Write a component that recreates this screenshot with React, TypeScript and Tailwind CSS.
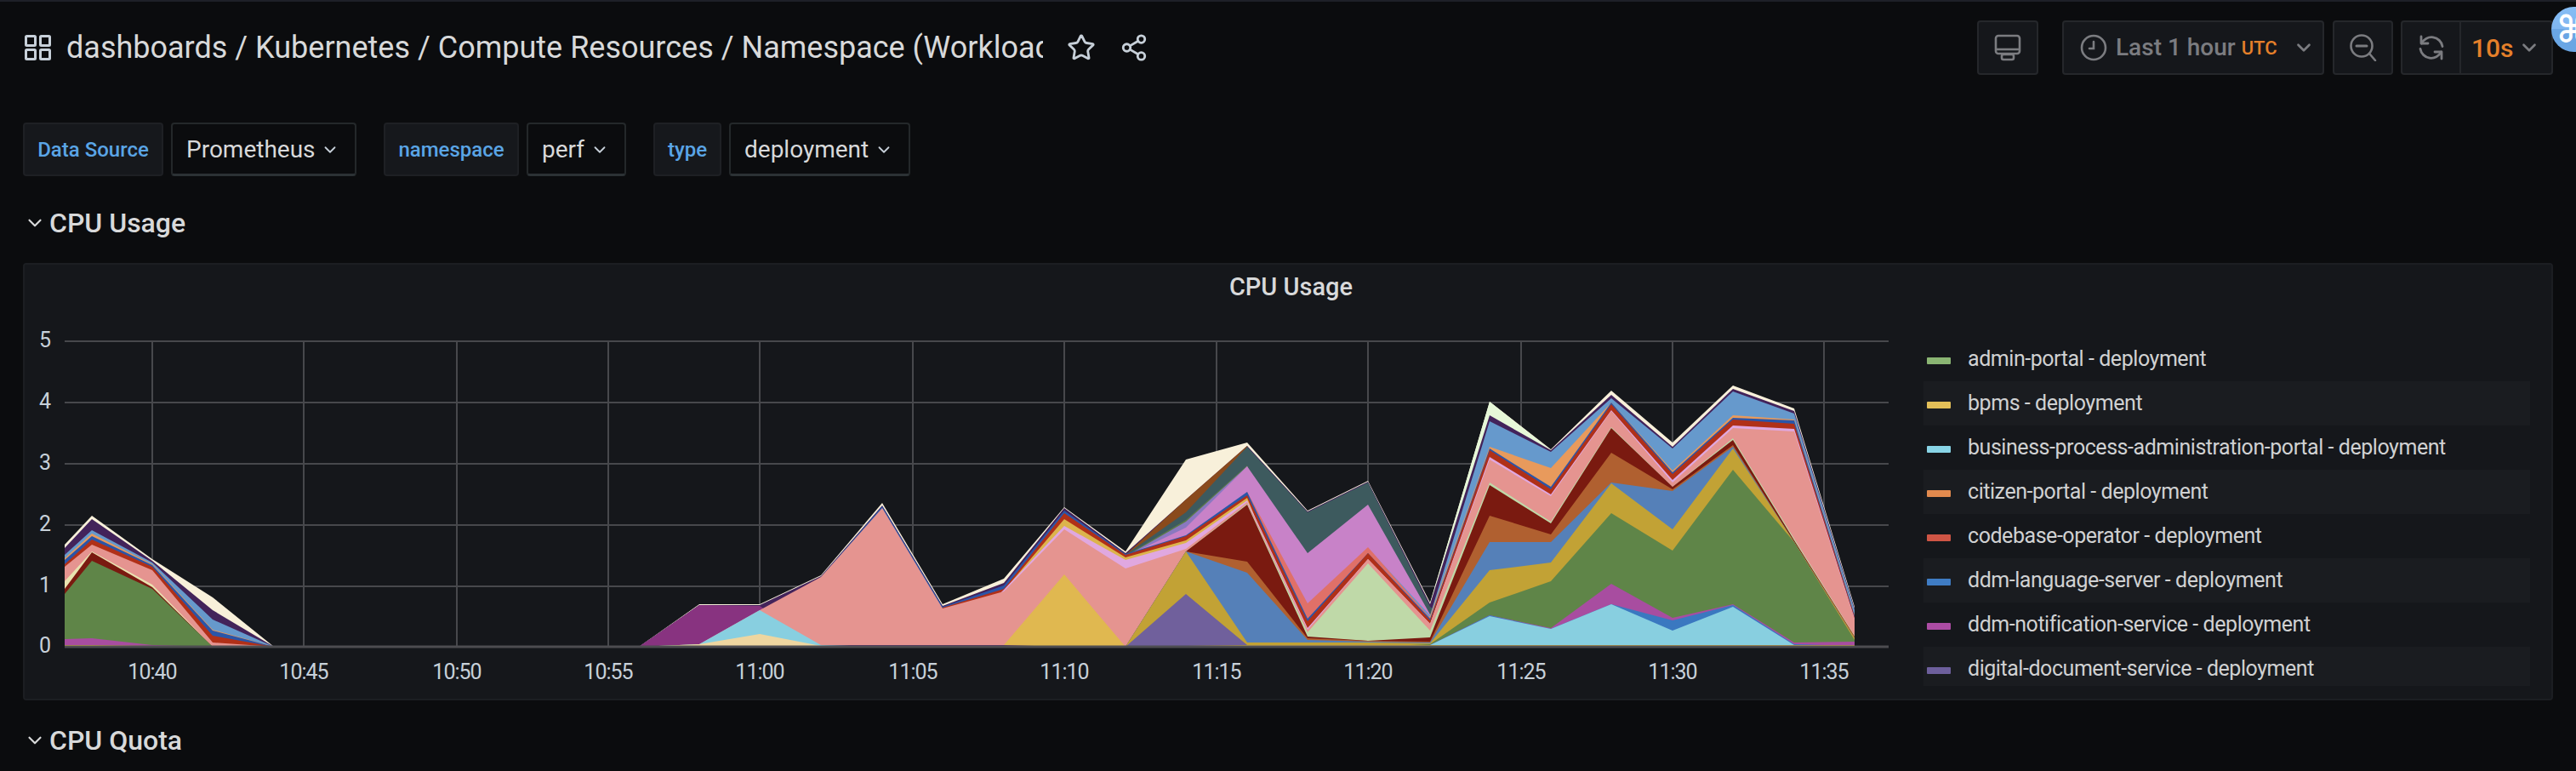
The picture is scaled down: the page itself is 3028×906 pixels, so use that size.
import React from 'react';
import { ChevronDown, Star, Share2 } from 'lucide-react';

// x position of every sample, page pixels
const XS = [76, 108, 179, 250, 322, 393, 465, 536, 608, 679, 751, 822, 893, 965, 1037, 1108, 1180, 1251, 1323, 1394, 1466, 1537, 1608, 1681, 1751, 1823, 1894, 1966, 2037, 2109, 2180];
const BASE = 760;

// a = 10:37-10:42, b = 10:58-11:22, c = 11:24-11:36, heights above the axis in px
const band = (a: number[], b: number[], c: number[]) => [...a, 0, 0, 0, 0, 0, 0, 0, ...b, ...c];
const A0 = [0, 0, 0, 0];
const B0 = [0, 0, 0, 0, 0, 0, 0, 0, 0, 0, 0, 0, 0];
const C0 = [0, 0, 0, 0, 0, 0, 0];

const LAYERS: { color: string; h: number[] }[] = [
  { color: '#f8f0da', h: band([120, 154, 103, 58], [50, 50, 84, 169, 50, 80, 164, 112, 220, 240, 160, 195, 52], [288, 232, 301, 240, 307, 280, 47]) },
  { color: '#e6f8d8', h: band(A0, [0, 0, 0, 0, 0, 0, 0, 0, 0, 0, 0, 0, 51], [288, 231, 0, 0, 0, 0, 0]) },
  { color: '#43235a', h: band([116, 150, 101, 43], [49, 49, 83, 166, 48, 75, 163, 110, 173, 236, 159, 194, 50], [272, 231, 296, 235, 303, 277, 45]) },
  { color: '#883380', h: band(A0, [49, 48, 0, 0, 0, 0, 0, 0, 0, 0, 0, 0, 0], C0) },
  { color: '#8a4a1c', h: band(A0, [0, 0, 0, 0, 0, 0, 0, 108, 173, 236, 0, 0, 0], C0) },
  { color: '#3d5a5e', h: band(A0, [0, 0, 0, 0, 0, 0, 0, 108, 158, 235, 158, 193, 47], C0) },
  { color: '#5a7a48', h: band(A0, [0, 0, 0, 0, 0, 0, 0, 107, 149, 213, 0, 0, 0], C0) },
  { color: '#8a78c0', h: band(A0, [0, 0, 0, 0, 0, 0, 0, 106, 147, 212, 0, 0, 0], C0) },
  { color: '#c882c8', h: band(A0, [0, 0, 0, 0, 0, 0, 0, 106, 140, 212, 110, 167, 38], C0) },
  { color: '#6699cc', h: band([108, 137, 99, 32], [0, 0, 0, 0, 0, 0, 0, 0, 0, 0, 0, 116, 37], [265, 229, 292, 233, 300, 274, 43]) },
  { color: '#e89a5c', h: band([104, 133, 97, 20], [0, 0, 0, 0, 0, 0, 0, 0, 0, 0, 0, 0, 36], [235, 210, 287, 207, 272, 267, 38]) },
  { color: '#e07068', h: band(A0, [0, 0, 0, 0, 0, 0, 0, 0, 0, 182, 51, 117, 34], C0) },
  { color: '#2a55a8', h: band([102, 130, 96, 19], [0, 0, 82, 165, 47, 72, 160, 109, 131, 182, 33, 110, 33], [233, 188, 287, 205, 269, 266, 37]) },
  { color: '#b03018', h: band([97, 126, 94, 13], [0, 0, 0, 0, 46, 68, 157, 108, 130, 178, 30, 110, 31], [231, 185, 285, 203, 267, 262, 35]) },
  { color: '#dcb44c', h: band(A0, [0, 0, 0, 0, 0, 66, 150, 105, 125, 175, 0, 0, 0], C0) },
  { color: '#e0a8e0', h: band(A0, [0, 0, 0, 0, 0, 67, 142, 102, 122, 172, 22, 103, 27], [223, 179, 278, 196, 260, 256, 33]) },
  { color: '#e59490', h: band([94, 120, 90, 5], [3, 43, 82, 163, 45, 65, 138, 92, 115, 170, 20, 103, 27], [220, 177, 277, 193, 257, 253, 32]) },
  { color: '#e8e3b0', h: band([77, 112, 73, 0], B0, C0) },
  { color: '#bfd9a8', h: band(A0, [0, 0, 0, 0, 0, 0, 0, 0, 112, 168, 17, 98, 19], [193, 147, 258, 188, 245, 127, 13]) },
  { color: '#7a1a10', h: band([68, 111, 70, 0], [0, 0, 0, 0, 0, 0, 0, 0, 112, 167, 12, 7, 11], [190, 145, 257, 188, 243, 125, 12]) },
  { color: '#b06030', h: band(A0, [0, 0, 0, 0, 0, 0, 0, 0, 112, 100, 10, 7, 6], [154, 132, 228, 185, 237, 123, 12]) },
  { color: '#5580b8', h: band(A0, [0, 0, 0, 0, 0, 0, 0, 0, 112, 87, 8, 6, 5], [123, 123, 193, 183, 235, 123, 10]) },
  { color: '#c2a235', h: band(A0, [0, 0, 0, 0, 0, 0, 0, 0, 112, 5, 5, 5, 4], [90, 99, 192, 138, 233, 123, 10]) },
  { color: '#e0b850', h: band(A0, [0, 0, 0, 0, 0, 2, 85, 0, 0, 0, 0, 0, 0], C0) },
  { color: '#70609c', h: band(A0, [0, 0, 0, 0, 0, 0, 0, 0, 62, 2, 0, 0, 0], C0) },
  { color: '#5c2f6a', h: band(A0, [3, 2, 2, 2, 2, 2, 0, 0, 0, 0, 0, 0, 0], C0) },
  { color: '#5f8548', h: band([62, 101, 68, 0], [0, 0, 0, 0, 0, 0, 0, 0, 0, 0, 0, 0, 3], [52, 77, 157, 113, 208, 123, 8]) },
  { color: '#a84da0', h: band([9, 10, 2, 0], [0, 0, 0, 0, 0, 0, 0, 0, 0, 0, 0, 0, 2], [37, 22, 74, 34, 50, 5, 6]) },
  { color: '#3a78c0', h: band(A0, [0, 0, 0, 0, 0, 0, 0, 0, 0, 0, 0, 0, 2], [37, 21, 50, 31, 49, 3, 1]) },
  { color: '#88cfe0', h: band(A0, [3, 43, 2, 0, 0, 0, 0, 0, 0, 0, 0, 0, 2], [36, 21, 50, 19, 47, 2, 1]) },
  { color: '#eed6a0', h: band(A0, [3, 15, 1, 0, 0, 0, 0, 0, 0, 0, 0, 0, 0], C0) },
  { color: '#e0b84c', h: band([2, 2, 1, 0], [0, 0, 0, 0, 0, 0, 0, 1, 1, 2, 2, 2, 2], [2, 2, 2, 2, 2, 2, 2]) },
];

const Y_TICKS = [
  { label: '5', y: 401 },
  { label: '4', y: 473 },
  { label: '3', y: 545 },
  { label: '2', y: 617 },
  { label: '1', y: 689 },
  { label: '0', y: 760 },
];

const X_TICKS = [
  { label: '10:40', x: 179 },
  { label: '10:45', x: 357 },
  { label: '10:50', x: 537 },
  { label: '10:55', x: 715 },
  { label: '11:00', x: 893 },
  { label: '11:05', x: 1073 },
  { label: '11:10', x: 1251 },
  { label: '11:15', x: 1430 },
  { label: '11:20', x: 1608 },
  { label: '11:25', x: 1788 },
  { label: '11:30', x: 1966 },
  { label: '11:35', x: 2144 },
];

const LEGEND = [
  { name: 'admin-portal - deployment', color: 'bg-[#8ab573]' },
  { name: 'bpms - deployment', color: 'bg-[#e3bf58]' },
  { name: 'business-process-administration-portal - deployment', color: 'bg-[#88d4e6]' },
  { name: 'citizen-portal - deployment', color: 'bg-[#e28a4e]' },
  { name: 'codebase-operator - deployment', color: 'bg-[#cf5545]' },
  { name: 'ddm-language-server - deployment', color: 'bg-[#3f7cc4]' },
  { name: 'ddm-notification-service - deployment', color: 'bg-[#ac4ca4]' },
  { name: 'digital-document-service - deployment', color: 'bg-[#6d5f9c]' },
];

const Chart = () => (
  <svg width={2190} height={428} viewBox="36 380 2190 428" className="shrink-0 block">
    {Y_TICKS.slice(0, 5).map((t) => (
      <line key={t.y} x1={76} x2={2220} y1={t.y} y2={t.y} stroke="#47484c" strokeWidth={2} />
    ))}
    {X_TICKS.map((t) => (
      <line key={t.x} x1={t.x} x2={t.x} y1={400} y2={760} stroke="#47484c" strokeWidth={2} />
    ))}
    {LAYERS.map((l, i) => (
      <polygon
        key={i}
        fill={l.color}
        points={`76,${BASE} ` + XS.map((x, j) => `${x},${BASE - l.h[j]}`).join(' ') + ` 2180,${BASE}`}
      />
    ))}
    <line x1={76} x2={2220} y1={760} y2={760} stroke="#4c4c50" strokeWidth={3} />
    {Y_TICKS.map((t) => (
      <text key={t.label} x={60} y={t.y + 7} textAnchor="end" fontSize={25} fill="#c7d0d9" fontFamily="Roboto, sans-serif">
        {t.label}
      </text>
    ))}
    {X_TICKS.map((t) => (
      <text key={t.label} x={t.x} y={798} textAnchor="middle" fontSize={25} letterSpacing={-1} fill="#c7d0d9" fontFamily="Roboto, sans-serif">
        {t.label}
      </text>
    ))}
  </svg>
);

const DashIcon = () => (
  <svg width={31} height={30} viewBox="0 0 31 30" fill="none" stroke="#c7d0d9" strokeWidth={3}>
    <rect x={1.500} y={1.500} width={11} height={11} rx={1} />
    <rect x={18.500} y={1.500} width={11} height={11} rx={1} />
    <rect x={1.500} y={17.500} width={11} height={11} rx={1} />
    <rect x={18.500} y={17.500} width={11} height={11} rx={1} />
  </svg>
);

const MonitorIcon = () => (
  <svg width={32} height={32} viewBox="0 0 32 32" fill="none" stroke="#7b7c80" strokeWidth={2.6} strokeLinejoin="round">
    <rect x={2} y={2} width={28} height={21} rx={3} />
    <line x1={2} y1={18} x2={30} y2={18} />
    <rect x={9} y={24} width={14} height={6} rx={2} />
  </svg>
);

const ClockIcon = () => (
  <svg width={32} height={32} viewBox="0 0 32 32" fill="none" stroke="#7b7c80" strokeWidth={2.6} strokeLinecap="round">
    <circle cx={16} cy={16} r={14} />
    <path d="M16 9v8h-5" />
  </svg>
);

const ZoomOutIcon = () => (
  <svg width={32} height={32} viewBox="0 0 32 32" fill="none" stroke="#7b7c80" strokeWidth={2.6} strokeLinecap="round">
    <circle cx={14} cy={14} r={12.5} />
    <line x1={8} y1={14} x2={20} y2={14} strokeWidth={3} />
    <line x1={24} y1={24} x2={30} y2={31} />
  </svg>
);

const SyncIcon = () => (
  <svg width={32} height={32} viewBox="0 0 32 32" fill="none" stroke="#7b7c80" strokeWidth={2.8} strokeLinecap="round" strokeLinejoin="round">
    <path d="M4 3v8h8" />
    <path d="M4.500 11A13 13 0 0 1 29 14.500" />
    <path d="M28 29v-8h-8" />
    <path d="M27.500 21A13 13 0 0 1 3 17.500" />
  </svg>
);

const ToolBtn = ({ children, className }: { children: React.ReactNode; className?: string }) => (
  <div className={`h-[64px] flex items-center justify-center bg-[#15171b] border-2 border-[#25272b] rounded-[4px] ${className ?? ''}`}>
    {children}
  </div>
);

const Variable = ({ label, value, labelW, valueW }: { label: string; value: string; labelW: string; valueW: string }) => (
  <div className="flex gap-[9px]">
    <div className={`${labelW} h-[63px] flex items-center justify-center bg-[#16181c] border-2 border-[#1e2024] rounded-[4px] text-[24px] font-medium text-[#5aa5e6]`}>
      {label}
    </div>
    <div className={`${valueW} h-[63px] flex items-center justify-between pl-[16px] pr-[18px] pt-[2px] bg-[#0b0c0e] border-2 border-[#24282a] border-b-[3px] border-b-[#2c3235] rounded-[4px] text-[28px] text-[#d8d9da]`}>
      {value}
      <ChevronDown size={22} color="#c7d0d9" strokeWidth={2} />
    </div>
  </div>
);

const RowTitle = ({ title, className }: { title: string; className?: string }) => (
  <div className={`h-[44px] flex items-center pl-[28px] gap-[4px] text-[32px] font-medium text-[#d8d9da] ${className ?? ''}`}>
    <ChevronDown size={26} color="#d8d9da" strokeWidth={2} />
    {title}
  </div>
);

export default function App() {
  return (
    <div className="relative w-[3028px] h-[906px] overflow-hidden bg-[#0b0c0e] font-['Roboto',sans-serif]">
      <div className="h-[2px] bg-[#1e2028]" />

      {/* top bar */}
      <div className="flex items-center justify-between pl-[29px] pr-[27px] mt-[22px] h-[64px]">
        <div className="flex items-center">
          <DashIcon />
          <div className="w-[1148px] ml-[18px] overflow-hidden whitespace-nowrap text-[36px] text-[#d8d9da]">
            dashboards / Kubernetes / Compute Resources / Namespace (Workload
          </div>
          <Star size={34} color="#c7d0d9" strokeWidth={2} className="ml-[28px]" />
          <Share2 size={34} color="#c7d0d9" strokeWidth={2} className="ml-[28px]" />
        </div>
        <div className="flex items-center">
          <ToolBtn className="w-[72px]">
            <MonitorIcon />
          </ToolBtn>
          <ToolBtn className="w-[308px] ml-[28px] !justify-start pl-[19px]">
            <ClockIcon />
            <span className="ml-[10px] text-[28px] font-medium text-[#7b7c80]">Last 1 hour</span>
            <span className="ml-[7px] text-[22px] font-medium text-[#e5802a]">UTC</span>
            <ChevronDown size={26} color="#7b7c80" strokeWidth={2.5} className="ml-[18px]" />
          </ToolBtn>
          <ToolBtn className="w-[71px] ml-[10px]">
            <ZoomOutIcon />
          </ToolBtn>
          <div className="flex h-[64px] w-[179px] ml-[9px] bg-[#15171b] border-2 border-[#25272b] rounded-[4px]">
            <div className="w-[69px] flex items-center justify-center border-r-2 border-[#25272b]">
              <SyncIcon />
            </div>
            <div className="flex items-center pl-[12px]">
              <span className="text-[30px] font-medium text-[#e5802a]">10s</span>
              <ChevronDown size={26} color="#7b7c80" strokeWidth={2.5} className="ml-[5px]" />
            </div>
          </div>
        </div>
      </div>

      {/* variables */}
      <div className="flex gap-[32px] pl-[27px] mt-[56px]">
        <Variable label="Data Source" value="Prometheus" labelW="w-[165px]" valueW="w-[218px]" />
        <Variable label="namespace" value="perf" labelW="w-[159px]" valueW="w-[117px]" />
        <Variable label="type" value="deployment" labelW="w-[80px]" valueW="w-[213px]" />
      </div>

      <RowTitle title="CPU Usage" className="mt-[33px]" />

      {/* panel */}
      <div className="mt-[25px] mx-[27px] bg-[#15171b] border-2 border-[#1c1e22] rounded-[4px] pl-[7px]">
        <div className="h-[69px] pb-[16px] flex items-center justify-center text-[29px] font-medium text-[#d8d9da]">CPU Usage</div>
        <div className="flex">
          <Chart />
          <div className="ml-[35px] mt-[16px] w-[713px] pb-[15px] text-[25px] tracking-[-0.45px] text-[#d0d1d2]">
            {LEGEND.map((item, i) => (
              <div
                key={item.name}
                className={`flex items-center pl-[4px] ${i === 7 ? 'h-[46px] pt-[6px]' : 'h-[52px]'} ${i % 2 === 1 ? 'bg-[#1a1c20]' : ''}`}
              >
                <div className={`w-[28px] h-[8px] rounded-[1px] mt-[4px] ${item.color}`} />
                <span className="ml-[20px] whitespace-nowrap">{item.name}</span>
              </div>
            ))}
          </div>
        </div>
      </div>

      <RowTitle title="CPU Quota" className="mt-[25px]" />

      {/* floating shortcut badge over the corner */}
      <div className="absolute left-[2999px] top-[8px] w-[53px] h-[53px] rounded-full flex items-center justify-center bg-[linear-gradient(to_bottom,#86bdf5_0%,#7fb6f0_50%,#6aa6e4_50%,#6aa6e4_100%)] text-[44px] leading-none font-bold font-['DejaVu_Sans',sans-serif] text-white">
        ⌘
      </div>
    </div>
  );
}
